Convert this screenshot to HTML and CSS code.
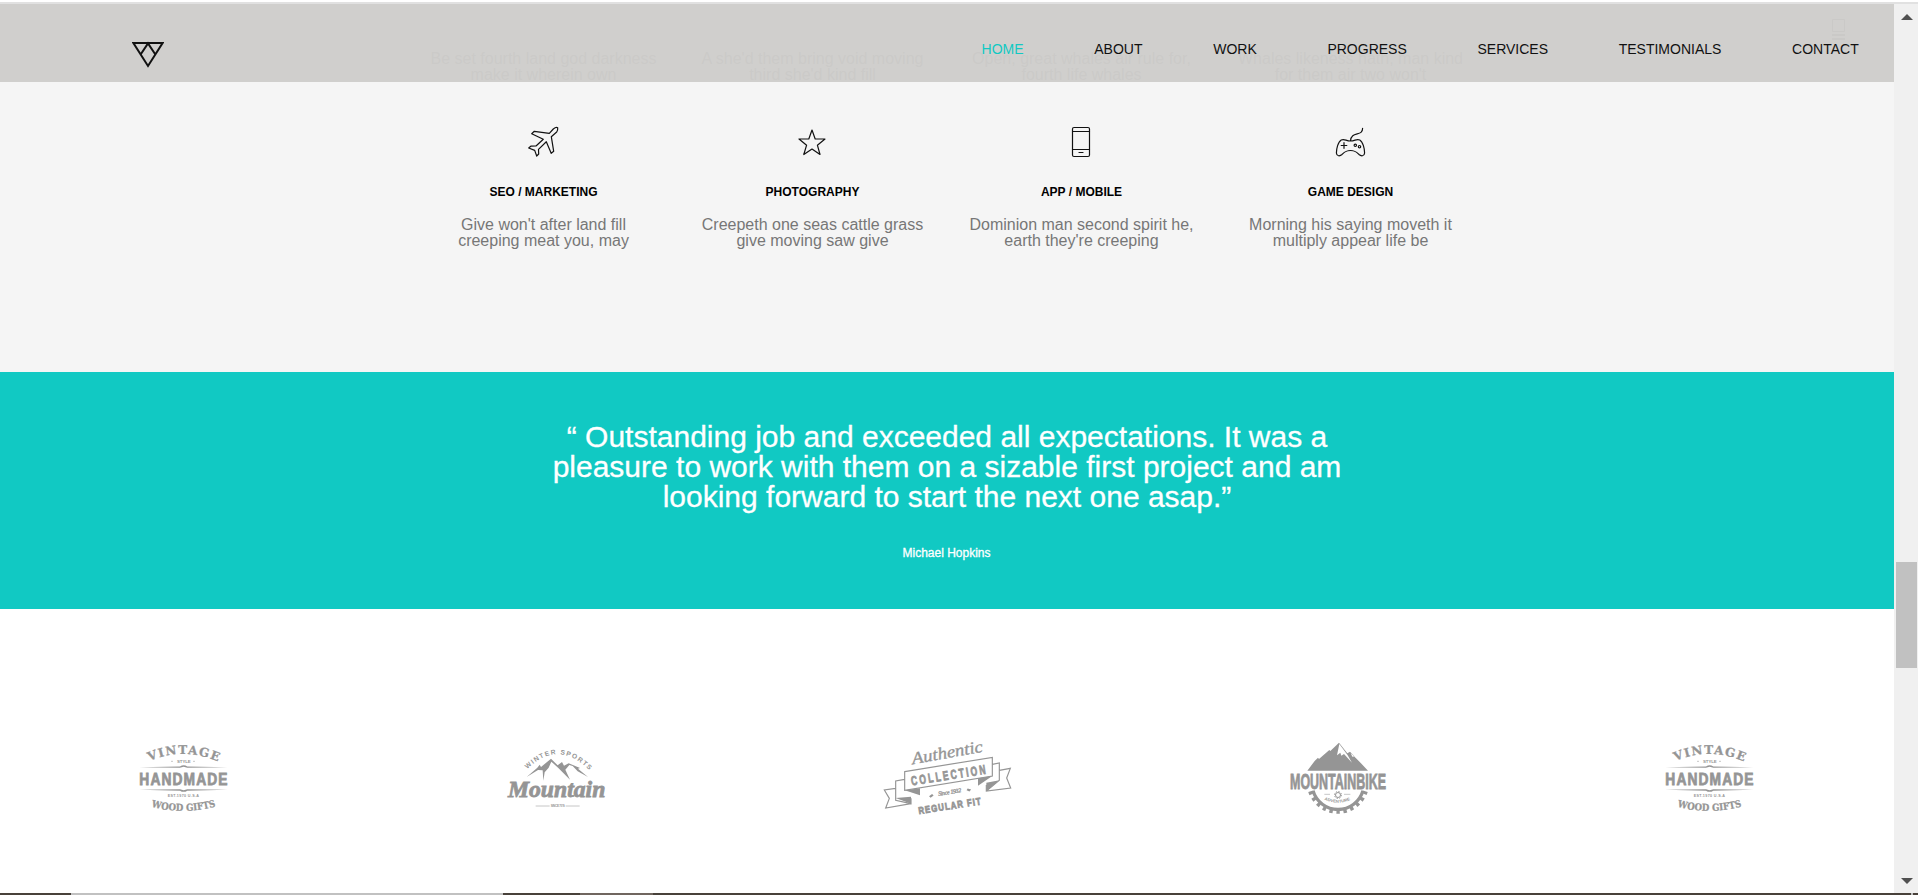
FILE: index.html
```html
<!DOCTYPE html>
<html lang="en">
<head>
<meta charset="utf-8">
<title>Studio</title>
<link rel="stylesheet" href="styles.css">
</head>
<body>
<div class="topline"></div>
<div class="viewport">
  <div class="page">
    <header class="header">
      <svg class="brand" viewBox="0 0 32 27" fill="none" stroke="#111" stroke-width="2"><path d="M1.4 2H30.6L16 25Z M8.6 13.5L16 2.4L23.4 13.5"/></svg>
      <nav class="nav">
        <a class="active">HOME</a><a>ABOUT</a><a>WORK</a><a>PROGRESS</a><a>SERVICES</a><a>TESTIMONIALS</a><a>CONTACT</a>
      </nav>
      <svg class="menu-ghost" viewBox="0 0 13 21" fill="none" stroke="#cac9c7"><path d="M.5 .5h12v12H.5z"/><path d="M0 16h13M0 20h13" stroke-width="2"/></svg>
    </header>
    <section class="services">
      <article class="service"><p>Be set fourth land god darkness<br>make it wherein own</p></article>
      <article class="service"><p>A she'd them bring void moving<br>third she'd kind fill</p></article>
      <article class="service"><p>Open, great whales air rule for,<br>fourth life whales</p></article>
      <article class="service"><p>Whales likeness hath, man kind<br>for them air two won't</p></article>
      <article class="service">
        <svg class="icon" viewBox="0 0 32 32"><path d="M22.3 7.3L26.3 3Q29 .8 30.7 1.7Q31 4 29.7 6L24.3 10.7L26.7 25.3L24.2 27.3L19.3 15.7L11.5 23.4L11.7 28L9.7 30L7.7 24.4L1.7 22L3.8 20.2L9 20L16.3 13.3L4.7 7.7L7.3 5.3Z"/></svg>
        <h3>SEO / MARKETING</h3><p>Give won't after land fill<br>creeping meat you, may</p>
      </article>
      <article class="service">
        <svg class="icon" viewBox="0 0 32 32"><path d="M16 4L19.2 13H29L21.4 19.2L24 28.5L16 23L7.8 28.5L10.6 19.2L3 13H12.8Z"/></svg>
        <h3>PHOTOGRAPHY</h3><p>Creepeth one seas cattle grass<br>give moving saw give</p>
      </article>
      <article class="service">
        <svg class="icon" viewBox="0 0 32 32"><rect x="7.5" y="1.5" width="17" height="29" rx="1.5"/><path d="M7.5 5.5h17M7.5 23.5h17M14 26.5h4"/></svg>
        <h3>APP / MOBILE</h3><p>Dominion man second spirit he,<br>earth they're creeping</p>
      </article>
      <article class="service">
        <svg class="icon" viewBox="0 0 32 32"><path d="M28.6 2.3C28.8 11 17 4.500 16.500 15M16.500 15C12 15 10.500 12.500 7.200 14C4 15.800 2.400 23 2.400 27C2.600 30.500 6 30.300 8 28.500C10.500 26 11.500 24.500 16.500 24.500C21.500 24.500 22.500 26 25 28.500C27 30.300 30.400 30.500 30.600 27C30.600 23 29 15.800 25.800 14C22.500 12.500 21 15 16.500 15M7.200 19.500h5.600M10 16.700v5.600"/><circle cx="21.300" cy="19.300" r="1.200"/><circle cx="25.500" cy="20.700" r="1.200"/></svg>
        <h3>GAME DESIGN</h3><p>Morning his saying moveth it<br>multiply appear life be</p>
      </article>
    </section>
    <section class="testimonial">
      <blockquote>“ Outstanding job and exceeded all expectations. It was a<br>pleasure to work with them on a sizable first project and am<br>looking forward to start the next one asap.”</blockquote>
      <cite>Michael Hopkins</cite>
    </section>
    <section class="clients">
      <svg class="client" viewBox="0 0 390 270">
        <defs>
          <path id="arcTop" d="M88 93Q190 50 296 95"/>
          <path id="arcBottom" d="M94 230Q190 256 288 229"/>
        </defs>
        <g id="vintage">
          <text class="slab" font-size="36"><textPath href="#arcTop" textLength="212">VINTAGE</textPath></text>
          <text class="sans" x="171" y="99" font-size="13" textLength="41">STYLE</text>
          <path d="M153 94h6M219 94h6" class="line"/>
          <path class="fill" d="M58 112L180 109.500Q191 102 202 109.500L322 112L202 113.500L191 110L180 113.500Z M58 179L180 177.500L191 181L202 177.500L322 179L202 182Q191 189 180 182Z"/>
          <text class="sans heavy spaced" x="58" y="164" font-size="50" textLength="268" lengthAdjust="spacingAndGlyphs">HANDMADE</text>
          <text class="sans" x="143" y="202" font-size="11" textLength="94">EST.1970 U.S.A</text>
          <text class="slab" font-size="29"><textPath href="#arcBottom" textLength="196" lengthAdjust="spacingAndGlyphs">WOOD GIFTS</textPath></text>
        </g>
      </svg>
      <svg class="client" viewBox="0 0 390 270">
        <path id="arcSports" d="M112 117Q202 28 294 117" fill="none"/>
        <text class="sans" font-size="20"><textPath href="#arcSports" textLength="213">WINTER SPORTS</textPath></text>
        <path class="fill" d="M110 141L142 113L149 104L153 111L183 86L203 106L216 96L222 107L236 100L270 114L264 116L294 141L263 124L248 108L238 105L226 119L240 149L205 114L184 95L176 113L164 127L160 152L158 121L144 120Z"/>
        <text class="script heavy" x="54" y="201" font-size="68" textLength="292" lengthAdjust="spacingAndGlyphs">Mountain</text>
        <path class="line" d="M137 228h42M227 228h42"/>
        <text class="sans" x="182" y="231" font-size="9" textLength="42">SINCE 70'S</text>
      </svg>
      <svg class="client wide" viewBox="0 0 450 270">
        <g transform="rotate(-10 232 70)"><text class="script medium" x="124" y="84" font-size="51" textLength="216" lengthAdjust="spacingAndGlyphs">Authentic</text></g>
        <g class="outline"><path d="M104 125L367 82V138L104 181Z M104 148L77 153V211L123 221V205 M77 175L43 180L58 205L47 234L123 221 M367 103L388 99V151L349 183 M388 121L421 115L410 144L422 174L349 183V165"/></g>
        <path class="fill" d="M104 181L150 175V196ZM77 204L123 200V221ZM324 145L367 138L324 167ZM349 158L388 151L349 183Z"/>
        <g transform="rotate(-9 236 135)"><text class="sans heavy wide-spaced" x="122" y="149" font-size="39" textLength="232" lengthAdjust="spacingAndGlyphs">COLLECTION</text></g>
        <g transform="rotate(-9 239 187)"><text class="script medium" x="204" y="192" font-size="18" textLength="70">Since 1932</text><path class="fill" d="M176 189L186 184L190 189L180 194ZM290 189L294 184L304 189L298 194Z"/></g>
        <g transform="rotate(-9 239 226)"><text class="sans heavy spaced" x="144" y="238" font-size="30" textLength="192" lengthAdjust="spacingAndGlyphs">REGULAR FIT</text></g>
      </svg>
      <svg class="client" viewBox="0 0 390 270">
        <path class="fill" d="M112 122L134 93L144 83L147 87L178 60L181 63L207 38L232 70L240 65L294 122Z"/>
        <path d="M208 42L201 76L211 68L214 77L222 72L246 98L233 76ZM242 69L247 80L255 79L272 97Z" fill="#fff"/>
        <text class="sans heavy" x="60" y="176" font-size="66" textLength="288" lengthAdjust="spacingAndGlyphs">MOUNTAINBIKE</text>
        <path class="gear" d="M129 182A78 78 0 0 0 279 182" stroke-width="10"/>
        <path class="gear" d="M121 184A87 87 0 0 0 287 184" stroke-width="13" stroke-dasharray="10 11"/>
        <circle class="gear" cx="204" cy="195" r="7.500" stroke-width="3"/>
        <circle class="gear" cx="204" cy="195" r="10.500" stroke-width="3" stroke-dasharray="4 4.250"/>
        <path class="line" d="M163 193h17M222 193h19"/>
        <path id="arcAdventure" d="M163 209Q203 227 243 209" fill="none"/>
        <text class="sans" font-size="12.500"><textPath href="#arcAdventure" textLength="80" lengthAdjust="spacingAndGlyphs">ADVENTURE</textPath></text>
      </svg>
      <svg class="client" viewBox="0 0 390 270"><use href="#vintage"/></svg>
    </section>
  </div>
  <aside class="scrollbar">
    <svg class="arrow" viewBox="0 0 12 6"><path d="M0 6L6 0L12 6Z"/></svg>
    <div class="thumb"></div>
    <svg class="arrow" viewBox="0 0 12 6"><path d="M0 0L6 6L12 0Z"/></svg>
  </aside>
</div>
<footer class="taskbar"><i class="dark a"></i><i class="light b"></i><i class="dark c"></i><i class="mid d"></i><i class="dark e"></i><i class="light f"></i><i class="dark g"></i></footer>
</body>
</html>
```
FILE: styles.css
```css
* { box-sizing: border-box; }
body { margin: 0; height: 895px; overflow: hidden; display: flex; flex-direction: column; font-family: "Liberation Sans", Arial, sans-serif; background: #fff; }
.topline { height: 4px; flex: none; border-bottom: 2px solid #e1e1e1; }
.viewport { height: 889px; flex: none; display: flex; }
.page { width: 1894px; position: relative; }

/* Translucent bar over the scrolled content */
.header { position: absolute; top: 0; left: 0; right: 0; height: 78px; padding-left: 131.5px; display: flex; justify-content: space-between; align-items: flex-start; background: rgba(206, 205, 203, .96); }
.brand { width: 32px; height: 27px; margin-top: 37px; }
.nav { display: flex; gap: 70.7px; padding: 37px 35.3px 0 0; font-size: 14px; line-height: 16px; color: #111; }
.nav .active { color: #11c9c3; }
.menu-ghost { position: absolute; left: 1832px; top: 15px; width: 13px; height: 21px; }

.services { height: 368px; padding: 47px 409px 0; background: #f5f5f5; display: grid; grid-template-columns: repeat(4, 269px); grid-template-rows: 75px auto; align-content: start; }
.service { display: flex; flex-direction: column; align-items: center; text-align: center; }
.icon { width: 32px; height: 32px; margin-right: 2px; fill: none; stroke: #111; stroke-width: 1.2; stroke-linejoin: round; stroke-linecap: round; }
.service h3 { margin: 28px 0 19px; font-size: 12px; line-height: 12px; font-weight: 700; color: #000; }
.service p { margin: 0; font-size: 16px; line-height: 16px; color: #777; }

.testimonial { height: 237px; padding-top: 50px; background: #11c9c3; color: #fff; display: flex; flex-direction: column; align-items: center; }
.testimonial blockquote { margin: 0; font-size: 30px; line-height: 30px; text-align: center; -webkit-text-stroke: .3px #fff; }
.testimonial cite { margin: 34px 1px 0 0; font-size: 12px; line-height: 14px; font-style: normal; font-weight: 400; -webkit-text-stroke: .3px #fff; }

.clients { height: 284px; padding: 121px 0 0 120px; background: #fff; display: grid; grid-template-columns: 370px 380px 400px 376px 130px; align-items: start; }
.client { width: 130px; height: 90px; overflow: visible; }
.client.wide { width: 150px; }
.client text, .fill { fill: #959595; }
.client defs path { fill: none; }
.line { fill: none; stroke: #aaa; stroke-width: 2; }
.outline { fill: none; stroke: #959595; stroke-width: 3.5; }
.gear { fill: none; stroke: #959595; }
.slab { font-family: "DejaVu Serif", serif; font-weight: 700; stroke: #959595; stroke-width: .8; }
.sans { font-family: "Liberation Sans", Arial, sans-serif; font-weight: 700; }
.script { font-family: "Liberation Serif", serif; font-style: italic; }
.medium { stroke: #959595; stroke-width: 1; }
.heavy { font-weight: 700; stroke: #959595; stroke-width: 2.4; }
.spaced { letter-spacing: 4px; }
.wide-spaced { letter-spacing: 10px; }

.scrollbar { width: 24px; background: #f0f0f0; padding: 10px 1px 9px 2px; display: flex; flex-direction: column; align-items: center; }
.arrow { width: 12px; height: 6px; fill: #505050; }
.thumb { width: 21px; height: 106px; margin: 542px 0 210px; background: #c1c1c1; }

.taskbar { height: 2px; flex: none; display: flex; }
.dark { background: #48413a; }
.light { background: #c1c1c1; }
.mid { background: #70665f; }
.a { width: 71px; }
.b { width: 432px; }
.c { width: 77px; }
.d { width: 73px; }
.e { width: 1258px; }
.f { width: 2px; }
.g { flex: 1; }
```
